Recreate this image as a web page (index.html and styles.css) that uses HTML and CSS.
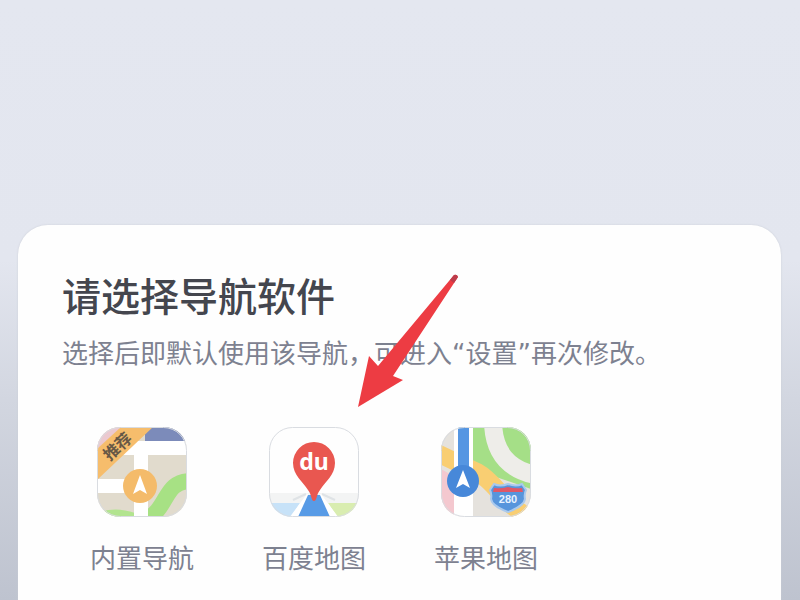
FILE: index.html
```html
<!DOCTYPE html>
<html lang="zh-CN">
<head>
    <meta charset="UTF-8">
    <meta name="viewport" content="width=device-width, initial-scale=1">
    <title>请选择导航软件</title>
    <link rel="stylesheet" href="styles.css">
</head>
<body>
    <main class="sheet">
        <h1>请选择导航软件</h1>
        <p class="hint">选择后即默认使用该导航，可进入“设置”再次修改。</p>
        <div class="apps">
            <button type="button" class="app">
                <svg class="icon" viewBox="0 0 90 90" aria-hidden="true">
                    <defs><clipPath id="tile"><rect width="90" height="90" rx="23"/></clipPath></defs>
                    <g clip-path="url(#tile)">
                        <rect width="90" height="90" fill="#e1dbcd"/>
                        <path d="M0 0H32L0 30Z" fill="#ebc9d0"/>
                        <path d="M48 0H90V14H48Z" fill="#7c8bba"/>
                        <path d="M0 92V86Q18 79 38 86V92Z" fill="#b2e48f"/>
                        <path d="M94 54C66 54 72 82 48 93" fill="none" stroke="#a7e184" stroke-width="16"/>
                        <path d="M34 14H90V28H51V90H37V66H0V52H37V28H22Z" fill="#fff"/>
                        <path d="M0 53V22L24 0H56Z" fill="#f6bd6c"/>
                        <circle cx="43" cy="59" r="17" fill="#f4bb6a"/>
                        <path d="M43 48L50 67L43 63L36 67Z" fill="#fff"/>
                        <text class="badge" x="21" y="25" text-anchor="middle" transform="rotate(-43 21 20)">推荐</text>
                    </g>
                    <rect class="edge" x="0.5" y="0.5" width="89" height="89" rx="23"/>
                </svg>
                <span>内置导航</span>
            </button>
            <button type="button" class="app">
                <svg class="icon" viewBox="0 0 90 90" aria-hidden="true">
                    <g clip-path="url(#tile)">
                        <rect width="90" height="90" fill="#fefefe"/>
                        <path d="M0 66H90V76H0Z" fill="#f3f4f4"/>
                        <path d="M0 76H31L22 90H0Z" fill="#c7e2f8"/>
                        <path d="M59 76H90V90H68Z" fill="#d9edb0"/>
                        <path d="M24 73L37 67M66 73L53 67" stroke="#dfe3e6" stroke-width="2"/>
                        <path d="M38 67L20 91H29L41 69ZM52 67L70 91H61L49 69Z" fill="#fff"/>
                        <path d="M39 68H51L61 90H29Z" fill="#589be6"/>
                        <path d="M45 74C42 74 43 68 39 63C34 55 24 48 24 36A21 21 0 0 1 66 36C66 48 56 55 51 63C47 68 48 74 45 74Z" fill="#e95750"/>
                        <text class="logo" x="45" y="43" text-anchor="middle">du</text>
                    </g>
                    <rect class="edge" x="0.5" y="0.5" width="89" height="89" rx="23"/>
                </svg>
                <span>百度地图</span>
            </button>
            <button type="button" class="app">
                <svg class="icon" viewBox="0 0 90 90" aria-hidden="true">
                    <g clip-path="url(#tile)">
                        <rect width="90" height="90" fill="#e5e2dd"/>
                        <path d="M30 0H90V62L55 50L30 35Z" fill="#a5df87"/>
                        <path d="M0 42L14 50V90H0Z" fill="#f4c8cf"/>
                        <path d="M52 -4C53 25 67 42 94 48" fill="none" stroke="#eeede9" stroke-width="18"/>
                        <path d="M-4 26L36 45C56 56 63 78 88 90" fill="none" stroke="#f9ce72" stroke-width="18"/>
                        <path d="M13 0H32V90H13Z" fill="#fff"/>
                        <path d="M17 0H28V54H17Z" fill="#5596e2"/>
                        <circle cx="22" cy="54" r="16" fill="#4788d9"/>
                        <path d="M22 43L29 61L22 57L15 61Z" fill="#fff"/>
                        <path d="M53 57Q59 60 67 57Q75 60 81 57L85 63Q83 67 84 72Q83 79 67 85Q51 79 50 72Q51 67 49 63Z" fill="#5795dc" stroke="#a9c9ed" stroke-width="2"/>
                        <path d="M53 61Q60 62 67 60Q74 62 81 61L82 65H52Z" fill="#df5867"/>
                        <text class="route" x="67" y="76" text-anchor="middle">280</text>
                    </g>
                    <rect class="edge" x="0.5" y="0.5" width="89" height="89" rx="23"/>
                </svg>
                <span>苹果地图</span>
            </button>
        </div>
        <svg class="arrow" viewBox="0 0 104 136" aria-hidden="true">
            <path d="M2 134L13 83L22 93L98 2Q101 1 102 4L37 103L47 107Z" fill="#ed3c43"/>
            <path d="M94 7L98 2Q101 1 102 4L98 10Z" fill="#bd3c4b"/>
        </svg>
    </main>
</body>
</html>
```
FILE: styles.css
```css
* {
    box-sizing: border-box;
}
body {
    margin: 0;
    min-height: 100vh;
    padding: 225px 19px 0 18px;
    display: flex;
    background: linear-gradient(#e4e7f0 0, #e3e6ef 260px, #d2d6e0 400px, #bec3cf 600px);
    font-family: "Noto Sans", "Noto Sans CJK SC", sans-serif;
}
.sheet {
    position: relative;
    flex: 1;
    padding: 43px 44px 24px;
    background: #fefefe;
    border-radius: 30px 30px 0 0;
    box-shadow: 0 0 2px #c9ccd5;
}
h1 {
    margin: 0;
    font-size: 39px;
    line-height: 56px;
    font-weight: 500;
    color: #44464e;
}
.hint {
    margin: 10px 0 0;
    font-family: "DejaVu Sans", "Noto Sans CJK SC", sans-serif;
    font-size: 26px;
    line-height: 40px;
    color: #7d8190;
}
.apps {
    display: flex;
    flex-wrap: wrap;
    gap: 68px;
    margin-top: 53px;
    padding-left: 28px;
}
.app {
    display: flex;
    flex-direction: column;
    align-items: center;
    gap: 21px;
    padding: 0;
    border: 0;
    background: none;
    font-family: inherit;
    font-size: 26px;
    line-height: 40px;
    color: #7d8190;
    cursor: pointer;
}
.icon {
    width: 90px;
    height: 90px;
}
.edge {
    fill: none;
    stroke: #d9dce1;
    stroke-width: 1px;
}
.badge {
    font-size: 16px;
    font-weight: 700;
    fill: #675846;
}
.logo {
    font-size: 23px;
    font-weight: 700;
    fill: #fff;
}
.route {
    font-family: "Liberation Sans", sans-serif;
    font-size: 11px;
    font-weight: 700;
    fill: #e8f2ff;
}
/* pointer lies over the hint text */
.arrow {
    position: absolute;
    top: 48px;
    left: 338px;
    width: 104px;
    height: 136px;
    pointer-events: none;
}
```
